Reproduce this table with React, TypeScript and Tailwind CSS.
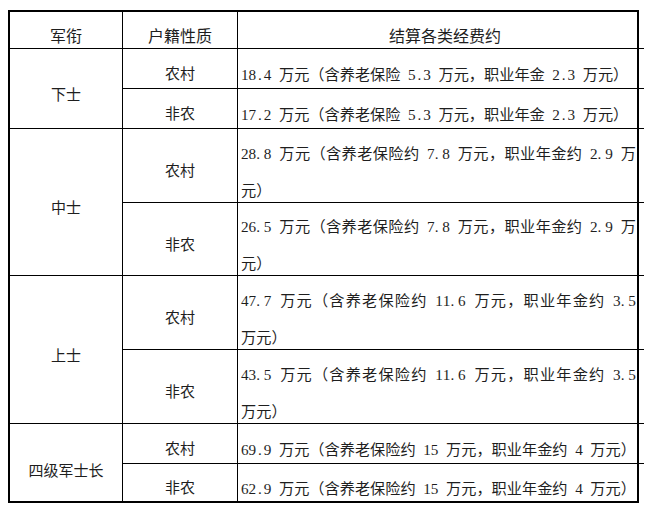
import React from "react";

type Item = { type: string; lines: string[] };
type Group = { rank: string; items: Item[] };

const groups: Group[] = [
  {
    rank: "下士",
    items: [
      { type: "农村", lines: ["18.4 万元（含养老保险 5.3 万元，职业年金 2.3 万元）"] },
      { type: "非农", lines: ["17.2 万元（含养老保险 5.3 万元，职业年金 2.3 万元）"] },
    ],
  },
  {
    rank: "中士",
    items: [
      { type: "农村", lines: ["28.8 万元（含养老保险约 7.8 万元，职业年金约 2.9 万", "元）"] },
      { type: "非农", lines: ["26.5 万元（含养老保险约 7.8 万元，职业年金约 2.9 万", "元）"] },
    ],
  },
  {
    rank: "上士",
    items: [
      { type: "农村", lines: ["47.7 万元（含养老保险约 11.6 万元，职业年金约 3.5", "万元）"] },
      { type: "非农", lines: ["43.5 万元（含养老保险约 11.6 万元，职业年金约 3.5", "万元）"] },
    ],
  },
  {
    rank: "四级军士长",
    items: [
      { type: "农村", lines: ["69.9 万元（含养老保险约 15 万元，职业年金约 4 万元）"] },
      { type: "非农", lines: ["62.9 万元（含养老保险约 15 万元，职业年金约 4 万元）"] },
    ],
  },
];

function Txt({ s }: { s: string }) {
  const parts: React.ReactNode[] = [];
  let buf = "";
  let k = 0;
  for (const ch of s) {
    if (ch.charCodeAt(0) < 128) {
      if (buf) {
        parts.push(<React.Fragment key={k++}>{buf}</React.Fragment>);
        buf = "";
      }
      parts.push(
        <span key={k++} className="inline-block w-[7.6px] text-center">
          {ch === " " ? "\u00a0" : ch}
        </span>
      );
    } else {
      buf += ch;
    }
  }
  if (buf) parts.push(<React.Fragment key={k++}>{buf}</React.Fragment>);
  return <>{parts}</>;
}

export default function App() {
  return (
    <div lang="zh-CN" className="w-[650px] h-[516px] bg-white pt-[10px] pl-[8px] font-['Liberation_Serif','Noto_Sans_CJK_SC',serif] text-[#1e1e1e]">
      <div className="w-[631px] border-2 border-black grid grid-cols-[113px_115px_1fr] grid-rows-[37px_40px_40px_74px_73px_74px_74px_40px_37px]">
        <div className="border-r border-b border-black flex items-center justify-center pt-[14px] text-[16px] leading-[20px]">
          军衔
        </div>
        <div className="border-r border-b border-black flex items-center justify-center pt-[14px] text-[16px] leading-[20px]">
          户籍性质
        </div>
        <div className="border-b border-black flex items-center justify-center pt-[14px] pl-[8px] text-[16px] leading-[20px]">
          结算各类经费约
        </div>
        {groups.map((g, gi) => {
          const lastGroup = gi === groups.length - 1;
          return (
            <React.Fragment key={g.rank}>
              <div
                className={
                  lastGroup
                    ? "row-span-2 border-r border-black flex items-center justify-center pt-[17px] text-[15px] leading-[20px]"
                    : "row-span-2 border-r border-b border-black flex items-center justify-center pt-[12px] text-[15px] leading-[20px]"
                }
              >
                {g.rank}
              </div>
              {g.items.map((it, ii) => {
                const last = lastGroup && ii === g.items.length - 1;
                return (
                  <React.Fragment key={it.type}>
                    <div
                      className={
                        last
                          ? "border-r border-black flex items-center justify-center pt-[11px] text-[15px] leading-[20px]"
                          : "border-r border-b border-black flex items-center justify-center pt-[11px] text-[15px] leading-[20px]"
                      }
                    >
                      {it.type}
                    </div>
                    <div
                      className={
                        last
                          ? "flex items-center pl-[3px] pr-[8px] pt-[12px] text-[15.2px] leading-[37px]"
                          : "border-b border-black flex items-center pl-[3px] pr-[8px] pt-[12px] text-[15.2px] leading-[37px]"
                      }
                    >
                      <div className="w-full whitespace-nowrap">
                        {it.lines.map((ln, li) => (
                          <div
                            key={li}
                            className={
                              li < it.lines.length - 1
                                ? "text-justify [text-align-last:justify]"
                                : "text-left"
                            }
                          >
                            <Txt s={ln} />
                          </div>
                        ))}
                      </div>
                    </div>
                  </React.Fragment>
                );
              })}
            </React.Fragment>
          );
        })}
      </div>
    </div>
  );
}
